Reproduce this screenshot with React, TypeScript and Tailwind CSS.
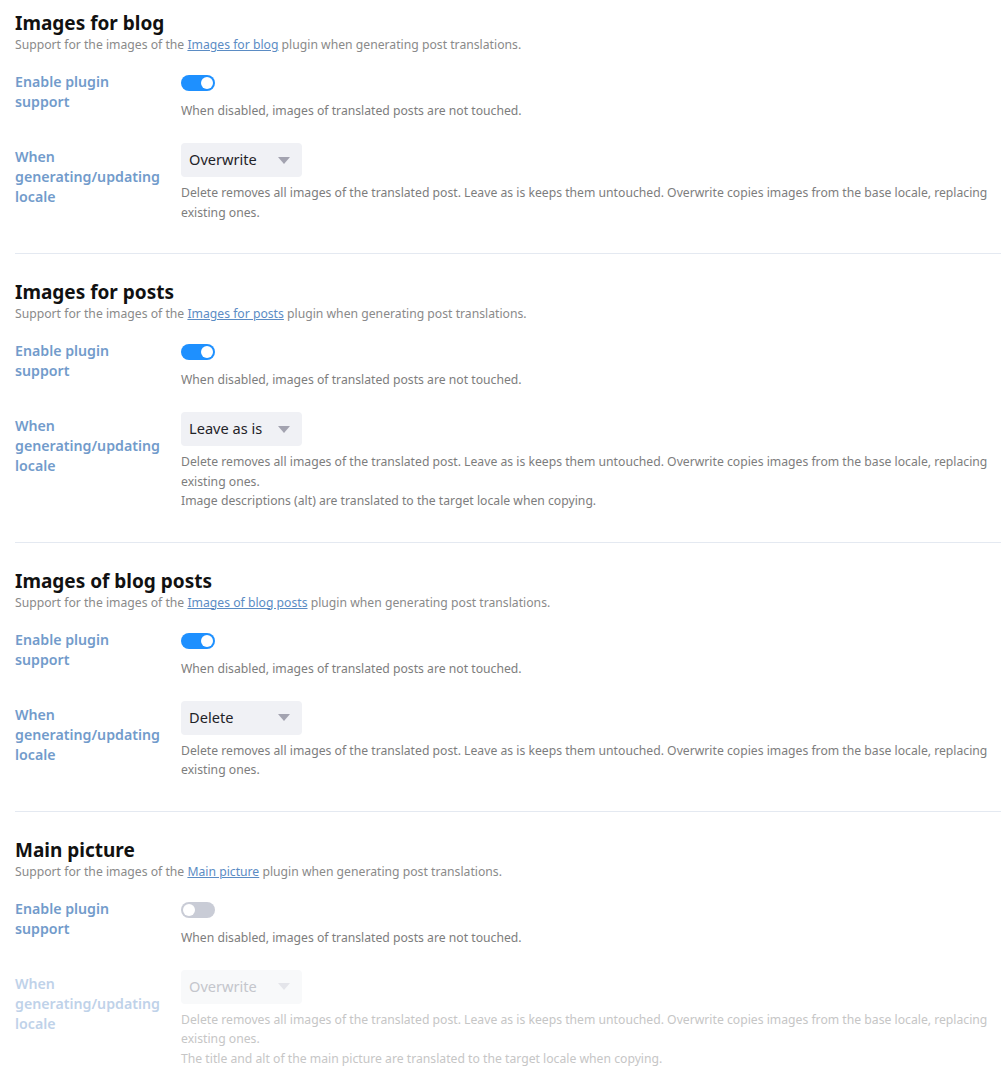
import React from "react";

type Section = {
  title: string;
  enabled: boolean;
  mode: string;
  extra?: string;
};

const sections: Section[] = [
  { title: "Images for blog", enabled: true, mode: "Overwrite" },
  {
    title: "Images for posts",
    enabled: true,
    mode: "Leave as is",
    extra: "Image descriptions (alt) are translated to the target locale when copying.",
  },
  { title: "Images of blog posts", enabled: true, mode: "Delete" },
  {
    title: "Main picture",
    enabled: false,
    mode: "Overwrite",
    extra: "The title and alt of the main picture are translated to the target locale when copying.",
  },
];

function Toggle({ on }: { on: boolean }) {
  return (
    <span
      className={`relative inline-block h-[16px] w-[34px] rounded-full ${on ? "bg-[#1e90ff]" : "bg-[#c9ccd6]"}`}
    >
      <span
        className={`absolute top-[2px] h-[12px] w-[12px] rounded-full bg-white ${on ? "left-[20px]" : "left-[2px]"}`}
      />
    </span>
  );
}

function Select({ value, disabled }: { value: string; disabled?: boolean }) {
  return (
    <div
      className={`flex h-[34px] w-[121px] items-center justify-between rounded-[4px] pl-[8px] pr-[12px] text-[14.6px] ${
        disabled ? "bg-[#f8f9fa] text-[#c4c6cc]" : "bg-[#f0f1f5] text-[#1f2328]"
      }`}
    >
      <span>{value}</span>
      <svg width="12" height="7" viewBox="0 0 12 7">
        <path d="M0 0 L12 0 L6 7 Z" fill={disabled ? "#e4e5ea" : "#a3a3b0"} />
      </svg>
    </div>
  );
}

function PluginSection({ s, first }: { s: Section; first: boolean }) {
  const off = !s.enabled;
  return (
    <div className={`${first ? "pt-[11px]" : "pt-[26px]"} pb-[31px]`}>
      <h2 className="text-[19px] font-bold leading-[24px] text-[#111]">{s.title}</h2>
      <p className="mt-[1px] text-[12.2px] leading-[18px] text-[#8a8a8a]">
        Support for the images of the{" "}
        <a href="#" className="text-[#5b8cc4] underline">
          {s.title}
        </a>{" "}
        plugin when generating post translations.
      </p>

      <div className="mt-[18px] flex flex-col gap-[22px]">
        {/* enable row */}
        <div className="flex">
          <div className="w-[166px] shrink-0 text-[14.2px] font-semibold leading-[20px] text-[#729bcb]">
            Enable plugin
            <br />
            support
          </div>
          <div className="flex flex-col">
            <div className="flex h-[20px] items-center pt-[2px]">
              <Toggle on={s.enabled} />
            </div>
            <p className="mt-[9px] text-[12.2px] leading-[20px] text-[#7d7d7d]">
              When disabled, images of translated posts are not touched.
            </p>
          </div>
        </div>

        {/* mode row */}
        <div className="flex">
          <div
            className={`w-[166px] shrink-0 pt-[4px] text-[14.2px] font-semibold leading-[20px] ${
              off ? "text-[#bfd2e9]" : "text-[#729bcb]"
            }`}
          >
            When
            <br />
            generating/updating
            <br />
            locale
          </div>
          <div className="flex flex-col">
            <Select value={s.mode} disabled={off} />
            <div
              className={`mt-[6px] text-[12.2px] leading-[19.5px] ${off ? "text-[#c6c6c6]" : "text-[#7d7d7d]"}`}
            >
              <p>
                Delete removes all images of the translated post. Leave as is keeps them untouched. Overwrite copies
                images from the base locale, replacing existing ones.
              </p>
              {s.extra && <p>{s.extra}</p>}
            </div>
          </div>
        </div>
      </div>
    </div>
  );
}

export default function App() {
  return (
    <div className="min-h-screen bg-white pl-[15px] pr-[5px]" style={{ fontFamily: '"Noto Sans", "Open Sans", sans-serif' }}>
      {sections.map((s, i) => (
        <div key={s.title} className={i < sections.length - 1 ? "border-b border-[#e4e9f1]" : ""}>
          <PluginSection s={s} first={i === 0} />
        </div>
      ))}
    </div>
  );
}
